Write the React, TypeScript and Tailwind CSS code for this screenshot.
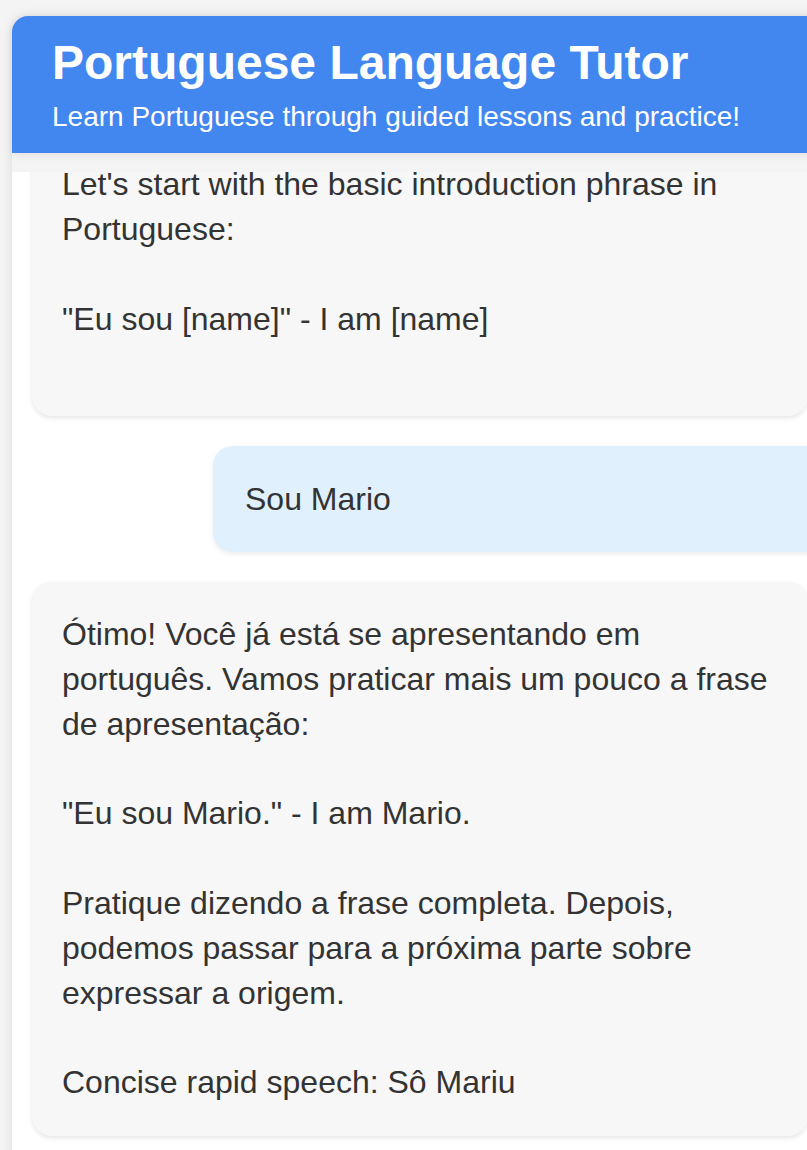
const messages = [
  {
    from: 'tutor',
    text: "Let's start with the basic introduction phrase in Portuguese:\n\n\"Eu sou [name]\" - I am [name]",
    trailing: true,
  },
  { from: 'user', text: 'Sou Mario' },
  {
    from: 'tutor',
    text:
      'Ótimo! Você já está se apresentando em português. Vamos praticar mais um pouco a frase de apresentação:\n\n"Eu sou Mario." - I am Mario.\n\nPratique dizendo a frase completa. Depois, podemos passar para a próxima parte sobre expressar a origem.\n\nConcise rapid speech: Sô Mariu',
  },
];

export default function App() {
  return (
    <div
      className="h-[1150px] w-screen overflow-hidden bg-[#f4f4f4] pl-[12px] pt-[16px] text-[#333]"
      style={{ fontFamily: '"Liberation Sans", Arial, sans-serif' }}
    >
      <div className="w-[1040px] rounded-tl-[16px] shadow-[0_0_12px_rgba(0,0,0,0.1)]">
        <header className="rounded-tl-[16px] bg-[#4287ef] pb-[20px] pl-[40px] pt-[18px] text-white shadow-[0_2px_10px_rgba(0,0,0,0.08)]">
          <h1 className="text-[48px] font-bold leading-[1.2]">Portuguese Language Tutor</h1>
          <p className="mt-[8px] text-[28px] leading-[1.2]">
            Learn Portuguese through guided lessons and practice!
          </p>
        </header>

        <div className="mt-[19px] h-[1000px] overflow-hidden bg-white px-[20px]">
          <div className="-mt-[40px] flex flex-col gap-[30px]">
            {messages.map((m, i) =>
              m.from === 'user' ? (
                <div
                  key={i}
                  className="ml-[181px] w-[789px] whitespace-pre-wrap rounded-[20px] bg-[#e1f0fd] px-[32px] pb-[30px] pt-[31px] text-[32px] leading-[1.4] shadow-[0_2px_5px_rgba(0,0,0,0.08)]"
                >
                  {m.text}
                </div>
              ) : (
                <div
                  key={i}
                  className={
                    m.trailing
                      ? 'w-[776px] whitespace-pre-wrap rounded-[20px] bg-[#f7f7f7] px-[30px] pb-[75px] pt-[30px] text-[32px] leading-[1.4] shadow-[0_2px_5px_rgba(0,0,0,0.1)]'
                      : 'w-[776px] whitespace-pre-wrap rounded-[20px] bg-[#f7f7f7] px-[30px] pb-[31px] pt-[30px] text-[32px] leading-[1.4] shadow-[0_2px_5px_rgba(0,0,0,0.1)]'
                  }
                >
                  {m.text}
                </div>
              ),
            )}
          </div>
        </div>
      </div>
    </div>
  );
}
